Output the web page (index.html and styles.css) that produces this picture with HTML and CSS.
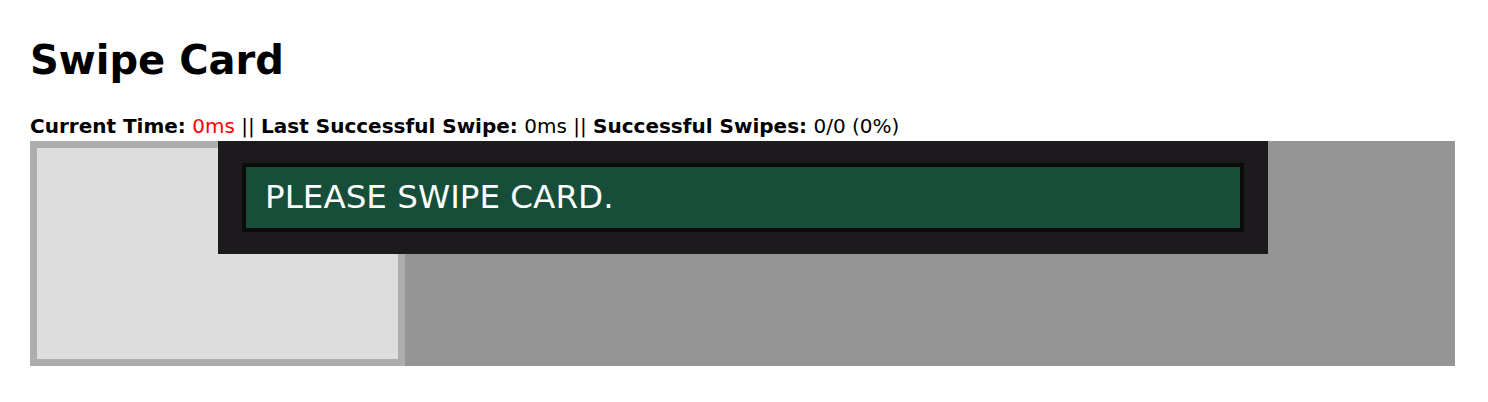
FILE: index.html
```html
<!DOCTYPE html>
<html lang="en">
<head>
<meta charset="utf-8">
<title>Swipe Card</title>
<link rel="stylesheet" href="styles.css">
</head>
<body>
<main class="page">
  <h1 class="title">Swipe Card</h1>
  <p class="status"><b>Current Time:</b> <span class="red">0ms</span> || <b>Last Successful Swipe:</b> 0ms || <b>Successful Swipes:</b> 0/0 (0%)</p>
  <div class="stage">
    <div class="card"></div>
    <div class="banner">
      <div class="message">PLEASE SWIPE CARD.</div>
    </div>
  </div>
</main>
</body>
</html>
```
FILE: styles.css
```css
html, body {
  margin: 0;
  padding: 0;
  background: #ffffff;
}
body {
  font-family: "DejaVu Sans", "Noto Sans", sans-serif;
  color: #000000;
}
.page {
  padding: 30px 30px 0 30px;
  display: flex;
  flex-direction: column;
}
.title {
  margin: 0;
  font-size: 40px;
  line-height: 60px;
  font-weight: 700;
}
.status {
  margin: 22px 0 0 0;
  font-size: 20px;
  line-height: 29px;
}
.status b {
  font-weight: 700;
}
.red {
  color: #ff0000;
}
.stage {
  position: relative;
  width: 1425px;
  height: 225px;
  background: #959596;
}
.card {
  width: 375px;
  height: 225px;
  box-sizing: border-box;
  border: 7px solid #adadad;
  background: #dddddd;
}
.banner {
  position: absolute;
  left: 188px;
  top: 0;
  width: 1050px;
  box-sizing: border-box;
  padding: 22px 24px;
  background: #1c1a1d;
}
.message {
  height: 69px;
  box-sizing: border-box;
  border: 4px solid #0b0b0b;
  background: #164e3a;
  color: #ffffff;
  font-size: 32.6px;
  line-height: 61px;
  padding-left: 19px;
}
```
